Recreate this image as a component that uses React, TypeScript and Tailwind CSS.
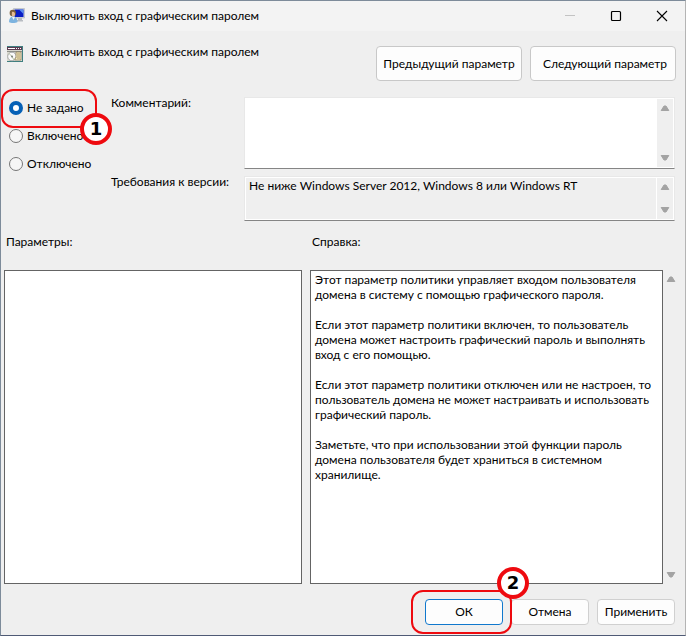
import { useState } from "react";
import type { ReactNode } from "react";

const TITLE = "Выключить вход с графическим паролем";

const HELP: string[][] = [
  ["Этот параметр политики управляет входом пользователя", "домена в систему с помощью графического пароля."],
  ["Если этот параметр политики включен, то пользователь", "домена может настроить графический пароль и выполнять", "вход с его помощью."],
  ["Если этот параметр политики отключен или не настроен, то", "пользователь домена не может настраивать и использовать", "графический пароль."],
  ["Заметьте, что при использовании этой функции пароль", "домена пользователя будет храниться в системном", "хранилище."],
];

const STATES = [
  { value: "none", label: "Не задано" },
  { value: "on", label: "Включено" },
  { value: "off", label: "Отключено" },
];

function UserMonitorIcon() {
  return (
    <svg width="16" height="16" viewBox="0 0 16 16" aria-hidden="true">
      <path d="M4.500 .5h11v9.500h-11z" fill="#d5d8dc" stroke="#aeb3ba" strokeWidth=".6" />
      <path d="M5.500 1.500h9v7.500h-9z" fill="#0a1fc4" />
      <path d="M10 1.500h4.500V6z" fill="#5c8ff0" />
      <path d="M9 10h4v2H9zM8 12h6v1.500H8z" fill="#b8bcc2" />
      <circle cx="3.800" cy="5" r="3.200" fill="#7a5f3c" />
      <path d="M3 4c2-.5 3 .5 3 2.200S5 9 4 9 2.500 6.500 3 4z" fill="#e6bd92" />
      <path d="M0 14c0-3.500 1.500-5.500 4-5.500s4.500 2 4.500 5.500c-2 1.300-7 1.300-8.500 0z" fill="#7db3df" />
      <path d="M3 9l1.500 3L6 9z" fill="#eef6fc" />
    </svg>
  );
}

function PolicyIcon() {
  return (
    <svg width="16" height="16" viewBox="0 0 16 16" aria-hidden="true">
      <path d="M0 0h16v16H0z" fill="#3f7f80" />
      <path d="M0 1h15v14H0z" fill="#d9d8cf" />
      <path d="M0 1h15v3H0z" fill="#5c3b52" />
      <path d="M1 2h7v1H1zM9 2h1v1H9zM11 2h1v1h-1zM13 2h1v1h-1z" fill="#fff" />
      <path d="M0 5h15v1H0z" fill="#8e8f89" />
      <circle cx="5" cy="10.500" r="4.300" fill="#fafafa" stroke="#96999a" strokeWidth=".8" />
      <path d="M5 10.500L2 7.500M5 10.500l2 3.500" stroke="#b9c6a1" />
      <circle cx="5" cy="10.500" r="1" fill="#78807a" />
      <path d="M9 6h5v8H8v-2h1z" fill="#f3e8bd" stroke="#867956" strokeWidth=".7" />
      <path d="M10 8h3M10 10h3M10 12h3" stroke="#9a8753" strokeWidth=".8" />
    </svg>
  );
}

function ArrowButton({ down = false, label }: { down?: boolean; label: string }) {
  return (
    <button type="button" aria-label={label} className="flex h-[18px] w-4 items-center justify-center">
      <svg width="10" height="8" viewBox="0 0 10 8" aria-hidden="true">
        <path
          d={down ? "M1.200 1.500h7.600L6 6H4z" : "M1.200 6.500h7.600L6 2H4z"}
          fill="#a3a3a3"
          stroke="#a3a3a3"
          strokeLinejoin="round"
        />
      </svg>
    </button>
  );
}

function ScrollTrack({ name }: { name: string }) {
  return (
    <div className="flex w-4 shrink-0 flex-col items-center justify-between bg-[#efefef]">
      <ArrowButton label={name + ": вверх"} />
      <ArrowButton down label={name + ": вниз"} />
    </div>
  );
}

function Callout({ n, className }: { n: number; className: string }) {
  return (
    <span
      className={
        "absolute z-20 flex h-8 w-8 items-center justify-center rounded-full border-4 border-[#ee0a0f] bg-white font-['DejaVu_Sans'] text-lg leading-none font-bold text-black " +
        className
      }
    >
      {n}
    </span>
  );
}

function Frame({ className }: { className: string }) {
  return <span className={"pointer-events-none absolute z-10 rounded-xl border-2 border-[#ee0a0f] " + className} />;
}

function DialogButton({ children, className }: { children: ReactNode; className: string }) {
  return (
    <button type="button" className={"rounded border bg-[#fdfdfd] " + className}>
      {children}
    </button>
  );
}

export default function App() {
  const [state, setState] = useState("none");
  const [comment, setComment] = useState("");

  return (
    <div className="flex min-h-screen flex-col border border-[#7d8b9a] border-r-[#b4b4b4] border-b-[#4f5a75] bg-[#efefef] font-['Lato','Open_Sans',sans-serif] text-xs text-black">
      <header className="flex h-[30px] shrink-0 items-center bg-[#f3f3f3] pl-2">
        <UserMonitorIcon />
        <h1 className="ml-1.5 flex-1">{TITLE}</h1>
        <button type="button" aria-label="Свернуть" disabled className="flex h-full w-[46px] items-center justify-center">
          <svg width="12" height="12" viewBox="0 0 12 12"><path d="M1 5.500h10" stroke="#c3c3c3" /></svg>
        </button>
        <button type="button" aria-label="Развернуть" className="flex h-full w-[46px] items-center justify-center">
          <svg width="12" height="12" viewBox="0 0 12 12"><rect x="1.500" y="1.500" width="9" height="9" rx="1" fill="none" stroke="#000" strokeWidth="1.200" /></svg>
        </button>
        <button type="button" aria-label="Закрыть" className="flex h-full w-[46px] items-center justify-center">
          <svg width="12" height="12" viewBox="0 0 12 12"><path d="M1 1l10 10M11 1L1 11" stroke="#000" strokeWidth="1.100" /></svg>
        </button>
      </header>

      <div className="flex items-start pt-[15px] pr-[9px] pl-1.5">
        <div className="flex h-4 flex-1 items-center gap-2">
          <PolicyIcon />
          <h2 className="-mt-1">{TITLE}</h2>
        </div>
        <div className="flex gap-2">
          <DialogButton className="h-[35px] w-[146px] border-[#c8c8c8]">Предыдущий параметр</DialogButton>
          <DialogButton className="h-[35px] w-[146px] border-[#c8c8c8] pl-1">Следующий параметр</DialogButton>
        </div>
      </div>

      <div className="flex pt-4 pr-2.5">
        <fieldset className="relative flex w-[110px] shrink-0 flex-col gap-3 pt-[3px] pl-2">
          <legend className="sr-only">Состояние параметра</legend>
          {STATES.map((s) => (
            <label key={s.value} className="flex h-4 items-center gap-1">
              <input
                type="radio"
                name="state"
                value={s.value}
                checked={state === s.value}
                onChange={() => setState(s.value)}
                className="h-[14px] w-[14px] appearance-none rounded-full border border-[#767676] bg-[#f6f6f6] checked:border-4 checked:border-[#0560b6] checked:bg-white"
              />
              {s.label}
            </label>
          ))}
          <Frame className="-top-2 left-0 h-[39px] w-24" />
          <Callout n={1} className="top-4 left-[79px]" />
        </fieldset>

        <div className="grid min-w-0 flex-1 grid-cols-[133px_1fr] gap-y-[7px]">
          <label htmlFor="comment" className="-mt-0.5 leading-4">Комментарий:</label>
          <div className="flex h-[72px] border border-[#e8e8e8] border-b-[#858585] bg-white p-px">
            <textarea
              id="comment"
              value={comment}
              onChange={(e) => setComment(e.target.value)}
              className="min-w-0 flex-1 resize-none px-1 outline-none"
            />
            <ScrollTrack name="Комментарий" />
          </div>
          <label htmlFor="supported" className="-mt-0.5 leading-4">Требования к версии:</label>
          <div className="flex h-[45px] border border-[#e8e8e8] border-b-[#858585] bg-white p-px">
            <textarea
              id="supported"
              readOnly
              value="Не ниже Windows Server 2012, Windows 8 или Windows RT"
              className="mr-px min-w-0 flex-1 resize-none overflow-hidden bg-[#efefef] px-[3px] leading-4 outline-none"
            />
            <ScrollTrack name="Требования" />
          </div>
        </div>
      </div>

      <div className="grid flex-1 grid-cols-[minmax(0,298fr)_minmax(0,361fr)_18px] grid-rows-[auto_1fr] pt-3 pr-1 pl-[3px]">
        <h3 className="pb-[19px] pl-0.5 leading-[18px]">Параметры:</h3>
        <h3 className="col-span-2 pb-[19px] pl-2.5 leading-[18px]">Справка:</h3>
        <section aria-label="Параметры" className="border border-[#646464] bg-white" />
        <section aria-label="Справка" className="ml-2 border border-[#646464] bg-white px-1 py-px leading-[15px]">
          {HELP.map((lines, i) => (
            <p key={i} className="mb-[15px]">
              {lines.map((line) => (
                <span key={line} className="block">{line}</span>
              ))}
            </p>
          ))}
        </section>
        <ScrollTrack name="Справка" />
      </div>

      <footer className="flex justify-end gap-2 pt-[15px] pr-2.5 pb-2.5">
        <div className="relative flex">
          <DialogButton className="h-[26px] w-[78px] border-[#1078cd]">ОК</DialogButton>
          <Frame className="-top-[9px] -left-[14px] h-11 w-[101px]" />
          <Callout n={2} className="-top-8 left-[72px]" />
        </div>
        <DialogButton className="h-[26px] w-[78px] border-[#d0d0d0]">Отмена</DialogButton>
        <DialogButton className="h-[26px] w-[78px] border-[#d0d0d0]">Применить</DialogButton>
      </footer>
    </div>
  );
}
